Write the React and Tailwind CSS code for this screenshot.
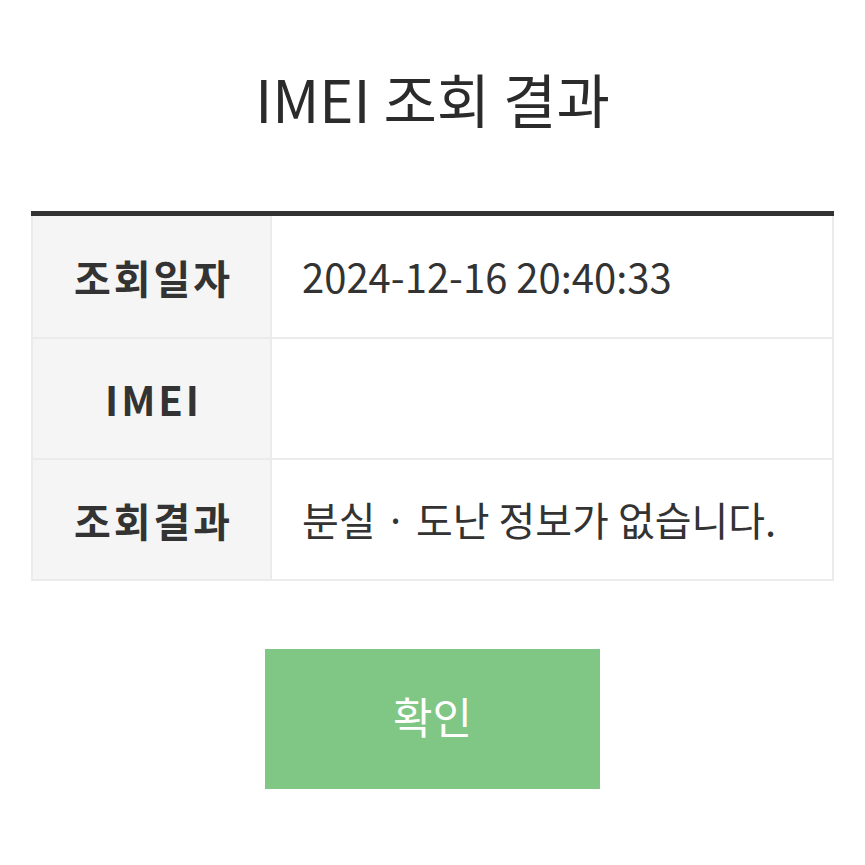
export default function App() {
  const font = { fontFamily: '"Noto Sans CJK KR", "Noto Sans", sans-serif' };
  return (
    <div className="w-[865px] h-[865px] bg-white text-[#333]" style={font}>
      <div className="pt-[56px] text-center text-[58px] leading-[84px] text-[#2b2b2b]">IMEI 조회 결과</div>
      <div className="mx-[31px] mt-[71px] border-t-[5px] border-[#333]">
        <div className="border-x-2 border-b-2 border-[#ebebeb]">
          {[
            ["조회일자", "2024-12-16 20:40:33"],
            ["IMEI", ""],
            ["조회결과", "분실 · 도난 정보가 없습니다."],
          ].map(([k, v], i) => (
            <div key={i} className={`flex h-[121px] ${i > 0 ? "border-t-2 border-[#ebebeb]" : ""}`}>
              <div className="w-[239px] shrink-0 bg-[#f5f5f5] border-r-2 border-[#ebebeb] flex items-center justify-center pl-[4px] text-[40px] font-bold tracking-[3px] text-[#333]">
                {k}
              </div>
              <div className="flex-1 flex items-center pl-[30px] pb-[2px] text-[40px] text-[#333]">{v}</div>
            </div>
          ))}
        </div>
      </div>
      <div className="flex justify-center mt-[68px]">
        <div className="w-[335px] h-[140px] bg-[#80c684] flex items-center justify-center pb-[8px] text-white text-[43px]">확인</div>
      </div>
    </div>
  );
}
